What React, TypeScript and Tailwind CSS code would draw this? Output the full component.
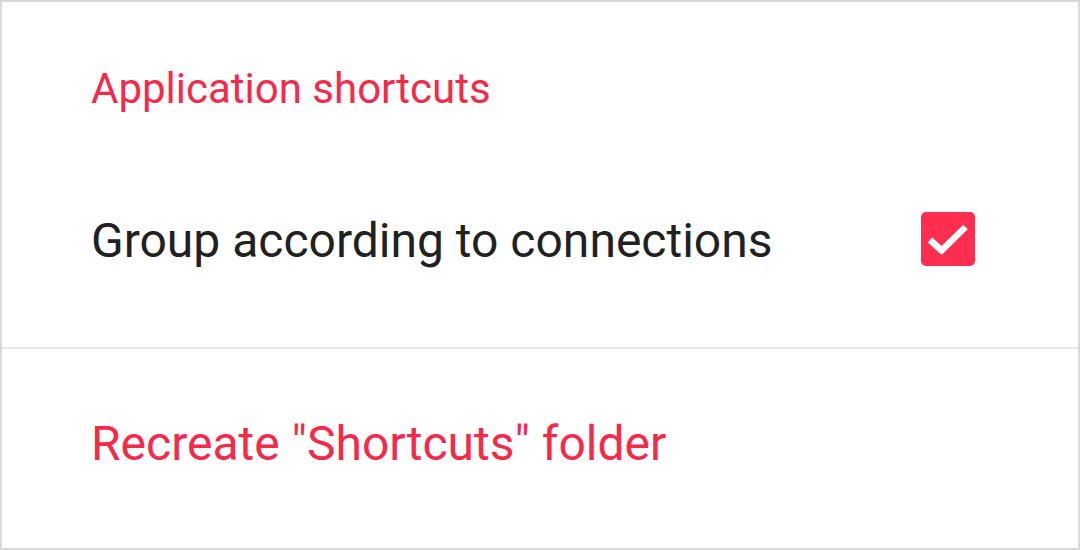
import React from 'react';

const RED = 'text-[#f52a4b]';

const CheckBox = ({ checked }: { checked: boolean }) => (
  <div className="w-[54px] h-[54px] rounded-[5px] bg-[#ff2d4f]">
    {checked && (
      <svg width="54" height="54" viewBox="0 0 54 54" fill="none">
        <path d="M9 28 L20.5 38.5 L44.5 15" stroke="white" strokeWidth="6.5" strokeLinecap="butt" strokeLinejoin="miter" />
      </svg>
    )}
  </div>
);

const App = () => {
  return (
    <div className="w-[1080px] h-[550px] bg-white border-2 border-[#d9d9d9] font-['Roboto',sans-serif] flex flex-col">
      <section className="h-[345px] flex flex-col">
        <div className="pl-[89px] pt-[62px] h-[128px]">
          <h2 className={`${RED} text-[42px] leading-[50px]`}>Application shortcuts</h2>
        </div>
        <div className="h-[217px] flex items-center justify-between pl-[89px] pr-[103px]">
          <span className="text-[#212121] text-[48px] leading-[56px] mt-[4px]">Group according to connections</span>
          <CheckBox checked />
        </div>
      </section>
      <div className="h-[2px] bg-[#e6e6e6]" />
      <section className="flex-1 pl-[89px] pt-[67px]">
        <span className={`${RED} text-[48px] leading-[56px]`}>Recreate "Shortcuts" folder</span>
      </section>
    </div>
  );
};

export default App;
